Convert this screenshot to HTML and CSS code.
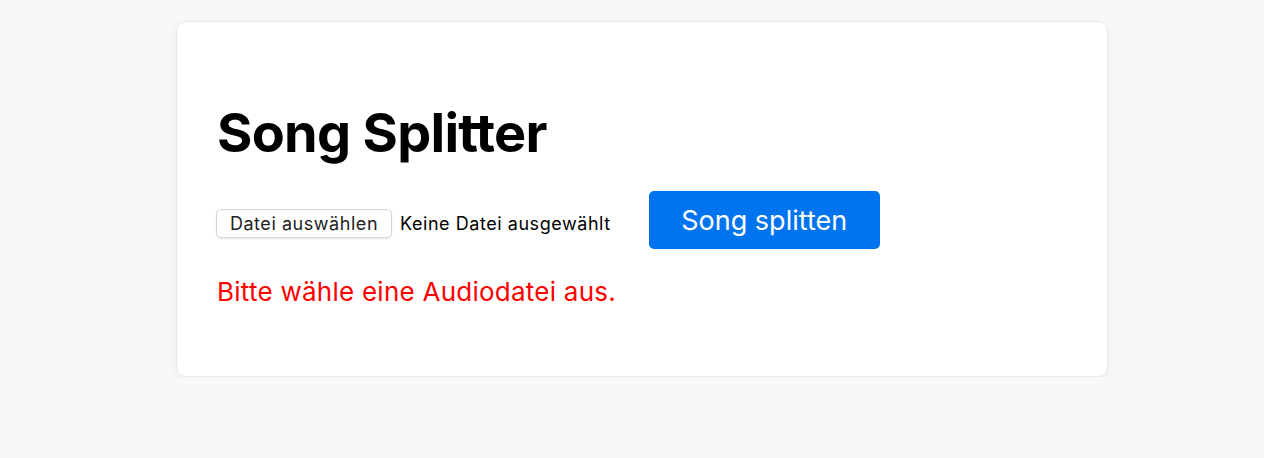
FILE: index.html
```html
<!DOCTYPE html>
<html lang="de">
<head>
<meta charset="utf-8">
<title>Song Splitter</title>
<link rel="stylesheet" href="styles.css">
</head>
<body>
<main class="card">
  <h1 class="title">Song Splitter</h1>
  <form class="row">
    <div class="file">
      <span class="file-btn">Datei auswählen</span>
      <span class="file-name">Keine Datei ausgewählt</span>
    </div>
    <button type="button" class="split-btn">Song splitten</button>
  </form>
  <p class="error">Bitte wähle eine Audiodatei aus.</p>
</main>
</body>
</html>
```
FILE: styles.css
```css
html, body {
  margin: 0;
  background: #f8f8f8;
}
body {
  padding: 21px 0 0 20px;
  font-family: Inter, "Noto Sans", sans-serif;
  color: #000;
}
.card {
  box-sizing: border-box;
  width: 932px;
  height: 356px;
  margin: 0 auto;
  background: #fff;
  border: 1px solid #e8e8e8;
  border-radius: 10px;
  box-shadow: 0 2px 10px rgba(0,0,0,0.06);
  padding: 81px 40px 0 40px;
}
.title {
  margin: 0;
  font-size: 54px;
  font-weight: 700;
  letter-spacing: -0.7px;
  line-height: 60px;
}
.row {
  display: flex;
  align-items: center;
  gap: 38px;
  margin-top: 28px;
}
.file {
  display: flex;
  align-items: center;
  gap: 8px;
  padding-top: 6px;
  font-size: 18px;
  letter-spacing: 0.55px;
}
.file-btn {
  box-sizing: border-box;
  height: 29px;
  width: 176px;
  margin-left: -1px;
  display: flex;
  align-items: center;
  justify-content: center;
  border: 1px solid #d6d6d6;
  border-radius: 5px;
  background: #fff;
  box-shadow: 0 1px 2px rgba(0,0,0,0.1);
  color: #222;
}
.file-name {
  color: #000;
}
.split-btn {
  box-sizing: border-box;
  width: 231px;
  height: 58px;
  border: none;
  border-radius: 5px;
  background: #0073ee;
  color: #fff;
  font-family: inherit;
  font-size: 27px;
  padding: 0;
}
.error {
  margin: 28px 0 0 0;
  color: #ff0000;
  font-size: 26px;
  letter-spacing: 0.25px;
  line-height: 30px;
}
```
